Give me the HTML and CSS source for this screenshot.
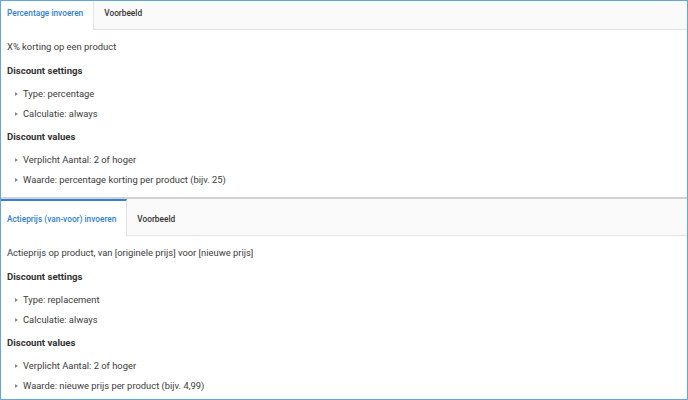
FILE: index.html
```html
<!DOCTYPE html>
<html>
<head>
<meta charset="utf-8">
<link rel="stylesheet" href="styles.css">
</head>
<body>
<div class="frame">
  <section class="panel panel-first">
    <div class="tabbar">
      <div class="tab active">Percentage invoeren</div>
      <div class="tab">Voorbeeld</div>
    </div>
    <div class="content">
      <p class="desc">X% korting op een product</p>
      <h4>Discount settings</h4>
      <ul>
        <li>Type: percentage</li>
        <li>Calculatie: always</li>
      </ul>
      <h4>Discount values</h4>
      <ul>
        <li>Verplicht Aantal: 2 of hoger</li>
        <li>Waarde: percentage korting per product (bijv. 25)</li>
      </ul>
    </div>
  </section>
  <section class="panel">
    <div class="tabbar">
      <div class="tab active">Actieprijs (van-voor) invoeren</div>
      <div class="tab">Voorbeeld</div>
    </div>
    <div class="content">
      <p class="desc">Actieprijs op product, van [originele prijs] voor [nieuwe prijs]</p>
      <h4>Discount settings</h4>
      <ul>
        <li>Type: replacement</li>
        <li>Calculatie: always</li>
      </ul>
      <h4>Discount values</h4>
      <ul>
        <li>Verplicht Aantal: 2 of hoger</li>
        <li>Waarde: nieuwe prijs per product (bijv. 4,99)</li>
      </ul>
    </div>
  </section>
</div>
</body>
</html>
```

FILE: styles.css
```css
* { box-sizing: border-box; }
html, body { margin: 0; padding: 0; background: #fff; }
body {
  font-family: Roboto, "Liberation Sans", Arial, sans-serif;
  font-size: 9.4px;
  color: #3c3c3c;
}
.frame {
  width: 688px;
  height: 400px;
  border: 1px solid #63a6dd;
  overflow: hidden;
}
.panel {
  border-bottom: 2px solid #d2d2d2;
}
.panel-first {
  margin-top: -8px;
}
.tabbar {
  display: flex;
  height: 37px;
  background: #fafafa;
  border-bottom: 1px solid #e2e2e2;
}
.tab {
  display: flex;
  align-items: center;
  padding: 0 10px 0 6px;
  border-top: 2px solid transparent;
  font-size: 8.3px;
  font-weight: 500;
  color: #333;
  margin-bottom: -1px;
}
.tab + .tab { padding: 0 10px; }
.tab.active {
  background: #fff;
  border-top-color: #2f80d6;
  border-right: 1px solid #e4e4e4;
  color: #2f7fd4;
}
.content {
  padding: 7px 6px 7px;
}
.desc {
  margin: 0 0 4px;
  line-height: 20px;
}
h4 {
  margin: 0 0 3px;
  font-size: 9.6px;
  font-weight: 700;
  line-height: 20px;
  color: #333;
}
ul {
  list-style: none;
  margin: 0 0 3px;
  padding: 0 0 0 8px;
}
ul:last-child { margin-bottom: 0; }
li {
  height: 20px;
  line-height: 20px;
  display: flex;
  align-items: center;
}
li::before {
  content: "";
  width: 0;
  height: 0;
  border-left: 3px solid #8a8a8a;
  border-top: 2px solid transparent;
  border-bottom: 2px solid transparent;
  margin-right: 5px;
}
```
